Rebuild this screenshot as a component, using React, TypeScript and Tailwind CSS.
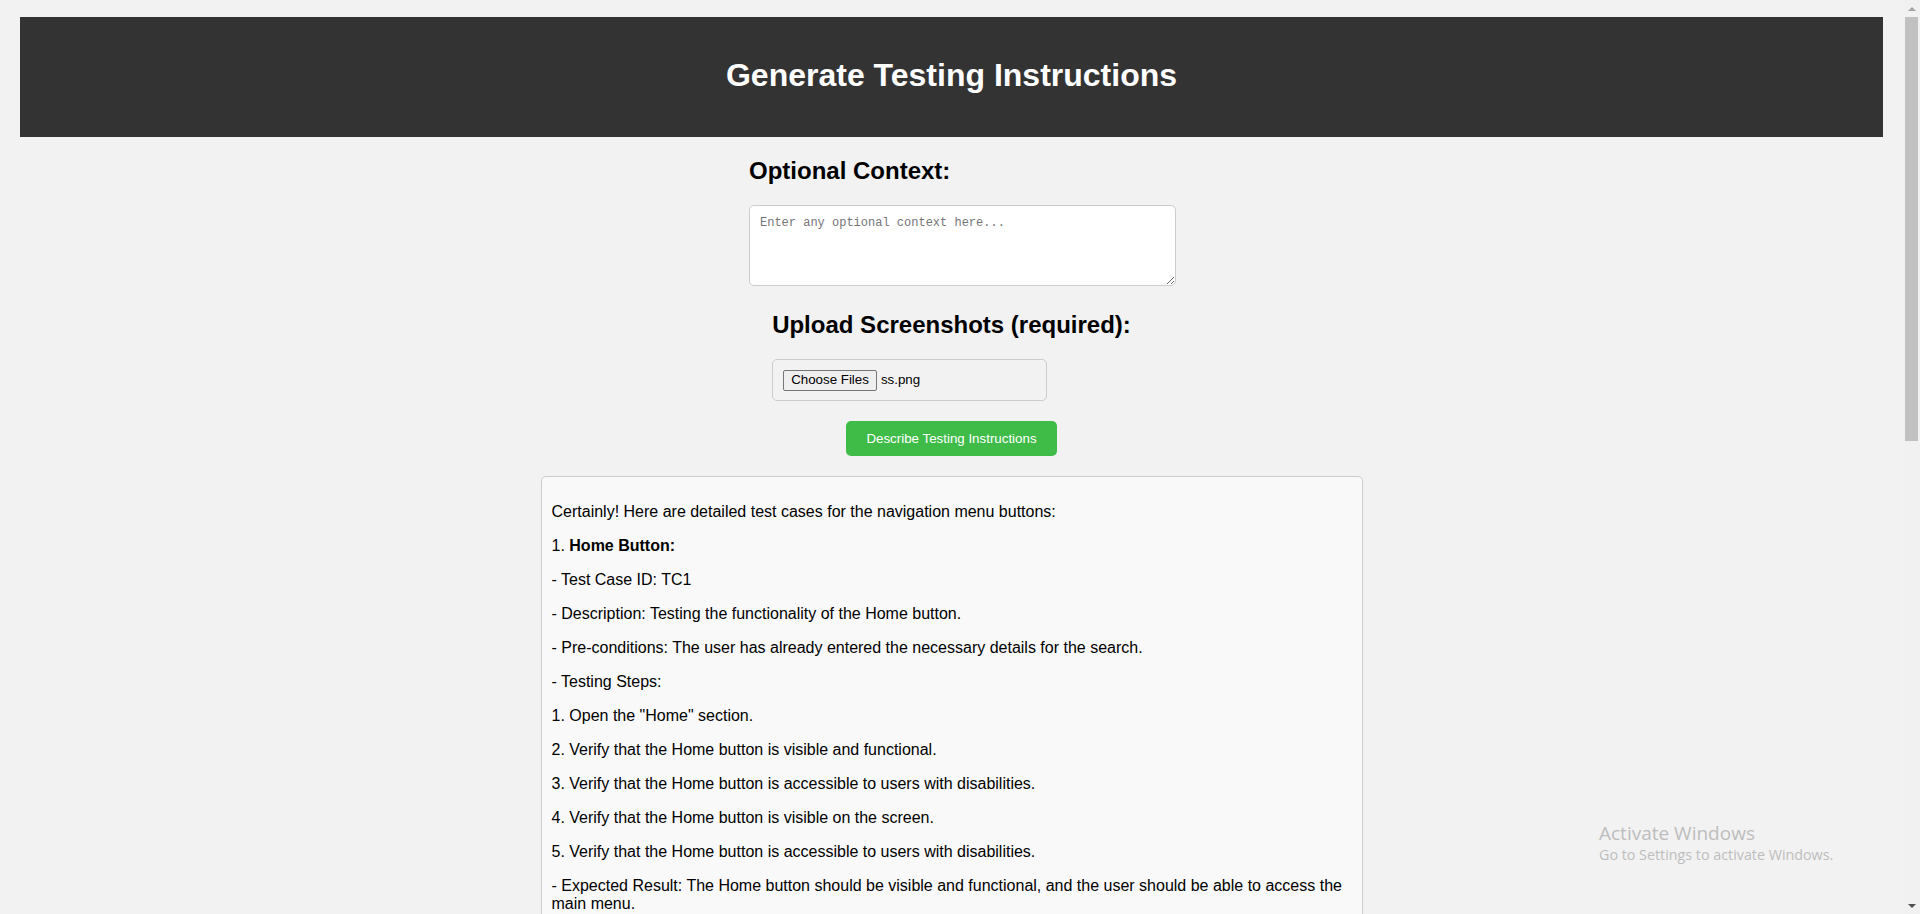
import React from 'react';

const resultLines: React.ReactNode[] = [
  'Certainly! Here are detailed test cases for the navigation menu buttons:',
  <>1. <strong>Home Button:</strong></>,
  '- Test Case ID: TC1',
  '- Description: Testing the functionality of the Home button.',
  '- Pre-conditions: The user has already entered the necessary details for the search.',
  '- Testing Steps:',
  '1. Open the "Home" section.',
  '2. Verify that the Home button is visible and functional.',
  '3. Verify that the Home button is accessible to users with disabilities.',
  '4. Verify that the Home button is visible on the screen.',
  '5. Verify that the Home button is accessible to users with disabilities.',
  '- Expected Result: The Home button should be visible and functional, and the user should be able to access the main menu.',
  <>2. <strong>About Button:</strong></>,
  '- Test Case ID: TC2',
  '- Description: Testing the functionality of the About button.',
];

const App: React.FC = () => {
  return (
    <div className="relative flex h-screen overflow-hidden bg-[#f2f2f2] font-['Liberation_Sans',Arial,sans-serif] text-black">
      <main className="flex-1 overflow-hidden px-[20px] pt-[17px]">
        <header className="bg-[#333333] pt-[18px] pb-[22px] text-center text-white">
          <h1 className="my-[21px] text-[32px] font-bold leading-[38px]">Generate Testing Instructions</h1>
        </header>

        <div className="mx-auto w-[405px] pb-[5px]">
          <h2 className="my-[20px] text-[24px] font-bold leading-[28px]">Optional Context:</h2>
          <textarea
            placeholder="Enter any optional context here..."
            className="block h-[81px] w-[427px] resize rounded-[5px] border border-[#cccccc] bg-white p-[10px] font-['Liberation_Mono',monospace] text-[12px] leading-[15px] placeholder:text-[#757575]"
          />
        </div>

        <div className="mx-auto w-fit">
          <h2 className="my-[20px] text-[24px] font-bold leading-[28px]">Upload Screenshots (required):</h2>
          <div className="flex h-[42px] w-[275px] items-center rounded-[5px] border border-[#cccccc] px-[10px] text-[13.33px]">
            <span className="flex h-[21px] items-center rounded-[2px] border border-[#767676] bg-[#efefef] px-[7px]">Choose Files</span>
            <span className="ml-[4px]">ss.png</span>
          </div>
        </div>

        <button className="mx-auto mt-[20px] block h-[35px] rounded-[5px] bg-[#3fbc48] px-[20px] text-[13.33px] text-white">
          Describe Testing Instructions
        </button>

        <div className="mx-auto mt-[20px] w-[822px] rounded-[5px] border border-[#cccccc] bg-[#f9f9f9] p-[10px] text-[16px] leading-[18px]">
          {resultLines.map((line, i) => (
            <p key={i} className="my-[16px]">{line}</p>
          ))}
        </div>
      </main>

      {/* scrollbar */}
      <div className="flex w-[17px] flex-col bg-[#f1f1f1]">
        <div className="flex h-[17px] items-center justify-center">
          <div className="h-0 w-0 border-x-[4px] border-b-[4px] border-x-transparent border-b-[#a3a3a3]" />
        </div>
        <div className="mx-[2px] h-[424px] bg-[#c1c1c1]" />
        <div className="flex-1" />
        <div className="flex h-[17px] items-center justify-center">
          <div className="h-0 w-0 border-x-[4px] border-t-[4px] border-x-transparent border-t-[#505050]" />
        </div>
      </div>

      <div className="pointer-events-none absolute left-[1599px] top-[820px] font-['Open_Sans',sans-serif] text-[#bdbdbd]">
        <div className="text-[19px] leading-[26px]">Activate Windows</div>
        <div className="text-[14.3px] leading-[18px]">Go to Settings to activate Windows.</div>
      </div>
    </div>
  );
};

export default App;
